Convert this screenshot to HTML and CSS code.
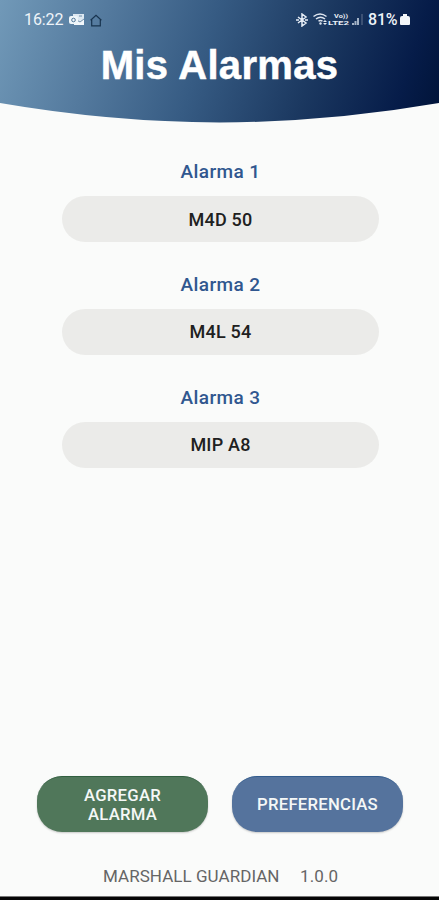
FILE: index.html
```html
<!DOCTYPE html>
<html lang="es">
<head>
<meta charset="utf-8">
<title>Mis Alarmas</title>
<link rel="stylesheet" href="styles.css">
</head>
<body>
<div class="app">
  <header class="header">
    <div class="status">
      <span class="time">16:22</span>
      <svg class="mail" width="17" height="14" viewBox="0 0 17 14"><path d="M4 1h11v10H4z" fill="#dce8f2"/><path d="M5 6l5 3 5-3v6H5z" fill="#f2f7fb"/><path d="M6 6l5 3 4-3M10 3h3" fill="none" stroke="#527798" stroke-width=".8"/><rect y="3" width="9" height="8" rx="2" fill="#edf5fa"/><circle cx="4.500" cy="7" r="1.800" fill="none" stroke="#527798"/></svg>
      <svg class="home" width="12" height="13" viewBox="0 0 12 13"><path d="M.6 6.200L6 1.400l5.400 4.800M1.700 5.500v6.300h8.600V5.500" fill="none" stroke="#18344f" stroke-width="1.200"/></svg>
      <span class="spacer"></span>
      <svg class="bluetooth" width="12" height="14" viewBox="0 0 12 14"><path d="M2 4l8 6-4 3V1l4 3-8 6M0 7h3m6 0h3" fill="none" stroke="#e6edf6" stroke-width="1.500"/></svg>
      <svg class="signal" width="51" height="15" viewBox="0 0 51 15">
        <g fill="none" stroke="#dce4ef" stroke-width="1.500"><path d="M.5 4.500q6.500-5 13 0M3 7q4.500-3.500 9 0M5.500 9.300q2-1.700 4 0"/></g>
        <circle cx="7.500" cy="11.500" r="1.200" fill="#dce4ef"/>
        <path d="M10 10l2-2 2 2zm0 1h4l-2 2z" fill="#e7edf5"/>
        <text x="21" y="6" textLength="14" lengthAdjust="spacingAndGlyphs" class="network">Vo))</text><text x="15" y="13.300" textLength="21" lengthAdjust="spacingAndGlyphs" class="network">LTE2</text>
        <path d="M39 13v-2h2v2zm2.500 0V9h2v4zm2.500 0V6h2v7z" fill="#a4b3c6"/><path d="M48.500 13V2h1v11z" fill="#64758f"/>
      </svg>
      <span class="charge">81%</span>
      <svg class="battery" width="10" height="13" viewBox="0 0 10 13"><path d="M3 1h4v2h1q2 0 2 2v6q0 1-1 1H1q-1 0-1-1V5q0-2 2-2h1z" fill="#f3f6fa"/></svg>
    </div>
    <h1 class="title">Mis Alarmas</h1>
  </header>
  <main class="alarms">
    <section class="alarm"><h2 class="name">Alarma 1</h2><button class="device">M4D 50</button></section>
    <section class="alarm"><h2 class="name">Alarma 2</h2><button class="device">M4L 54</button></section>
    <section class="alarm"><h2 class="name">Alarma 3</h2><button class="device">MIP A8</button></section>
  </main>
  <div class="actions">
    <button class="action add">AGREGAR<br>ALARMA</button>
    <button class="action prefs">PREFERENCIAS</button>
  </div>
  <footer class="footer"><span class="brand">MARSHALL GUARDIAN</span><span class="version">1.0.0</span></footer>
  <div class="navbar"></div>
</div>
</body>
</html>
```
FILE: styles.css
```css
* { box-sizing: border-box; }
body { margin: 0; background: #fafbfa; font-family: Roboto, sans-serif; }
button { border: 0; padding: 0; font-family: inherit; }
.app { display: flex; flex-direction: column; height: 900px; overflow: hidden; }
.header {
  height: 123px;
  flex: none;
  background: linear-gradient(108deg, #7199b8 0%, #547a9e 23%, #365b83 46%, #1b3860 70%, #061c49 90%, #001338 100%);
  clip-path: path("M0 0H439V103Q329 122 219.500 122.500Q110 122 0 103Z");
}
.status { display: flex; align-items: center; height: 39px; padding: 0 29px 0 24px; color: #eef4f9; font-size: 16px; }
.time { width: 40px; letter-spacing: -.1px; }
.mail { margin-left: 5px; }
.home { margin: 2px 0 0 4px; }
.spacer { flex: 1; }
.signal { margin-left: 5px; }
.network { fill: #e7edf5; font-size: 6px; font-weight: 700; }
.charge { width: 32px; margin-left: 4px; font-size: 16px; font-weight: 500; letter-spacing: -.2px; }
.title { margin: 4px 0 0; color: #fff; font: 700 40px/44px "Liberation Sans", sans-serif; letter-spacing: .3px; -webkit-text-stroke: .5px #fff; text-align: center; }
.alarms { flex: none; height: 653px; padding-top: 37px; }
.alarm { height: 112.750px; width: 317px; margin: 0 auto 0 62px; text-align: center; }
.name { margin: 0; height: 36px; font-size: 19px; font-weight: 500; line-height: 24px; letter-spacing: .4px; color: #30578f; }
.device { display: block; width: 100%; height: 46.300px; border-radius: 24px; background: #ebebe9; color: #202020; font-size: 18px; font-weight: 500; letter-spacing: .2px; }
.actions { display: flex; gap: 24px; padding-left: 37px; height: 56px; flex: none; }
.action { width: 171px; height: 56px; border-radius: 25px; color: #f5f8f7; font-size: 16.700px; font-weight: 500; line-height: 19px; letter-spacing: .25px; box-shadow: 0 1px 2px #0003; }
.add { background: #50775a; border-top: 1px solid #315f40; }
.prefs { background: #55739d; border-top: 1px solid #315b8d; }
.footer { display: flex; height: 64px; padding: 33px 0 0 103px; color: #656565; font-size: 17px; line-height: 22px; white-space: pre; }
.brand { width: 197px; letter-spacing: .05px; }
.version { letter-spacing: .1px; }
.navbar { height: 4px; flex: none; background: #050505; border-top: 1px solid #777; }
```
